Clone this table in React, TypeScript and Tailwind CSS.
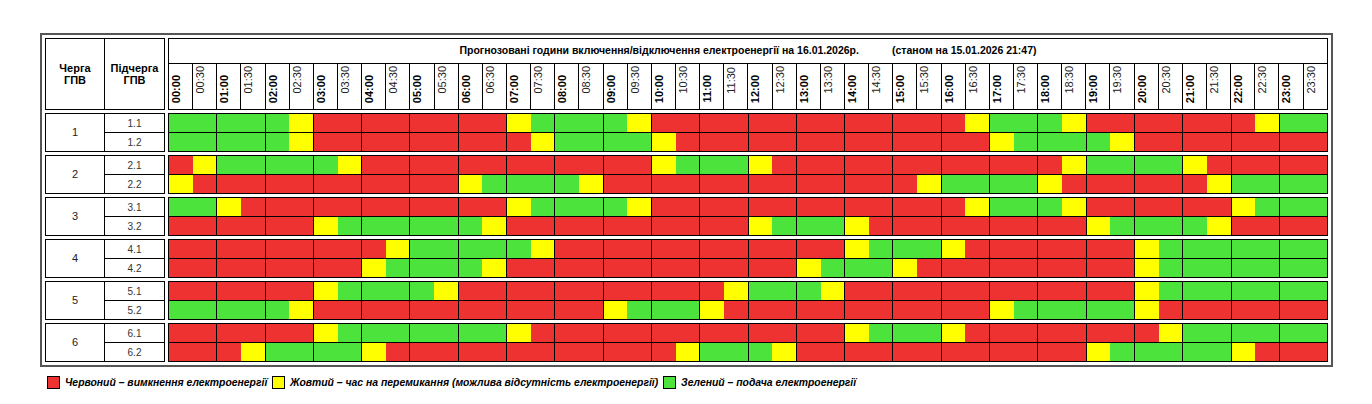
import React from "react";

/* ─── Schedule data: one pair per hour, R = off, Y = switching, G = on ─── */
const groups: { id: string; subs: { id: string; hours: string }[] }[] = [
  {
    id: "1",
    subs: [
      { id: "1.1", hours: "GG GG GY RR RR RR RR YG GG GY RR RR RR RR RR RR RY GG GY RR RR RR RY GG" },
      { id: "1.2", hours: "GG GG GY RR RR RR RR RY GG GG YR RR RR RR RR RR RR YG GG GY RR RR RR RR" },
    ],
  },
  {
    id: "2",
    subs: [
      { id: "2.1", hours: "RY GG GG GY RR RR RR RR RR RR YG GG YR RR RR RR RR RR RY GG GG YR RR RR" },
      { id: "2.2", hours: "YR RR RR RR RR RR YG GG GY RR RR RR RR RR RR RY GG GG YR RR RR RY GG GG" },
    ],
  },
  {
    id: "3",
    subs: [
      { id: "3.1", hours: "GG YR RR RR RR RR RR YG GG GY RR RR RR RR RR RR RY GG GY RR RR RR YG GG" },
      { id: "3.2", hours: "RR RR RR YG GG GG GY RR RR RR RR RR YG GG YR RR RR RR RR YG GG GY RR RR" },
    ],
  },
  {
    id: "4",
    subs: [
      { id: "4.1", hours: "RR RR RR RR RY GG GG GY RR RR RR RR RR RR YG GG YR RR RR RR YG GG GG GG" },
      { id: "4.2", hours: "RR RR RR RR YG GG GY RR RR RR RR RR RR YG GG YR RR RR RR RR YG GG GG GG" },
    ],
  },
  {
    id: "5",
    subs: [
      { id: "5.1", hours: "RR RR RR YG GG GY RR RR RR RR RR RY GG GY RR RR RR RR RR RR YG GG GG GG" },
      { id: "5.2", hours: "GG GG GY RR RR RR RR RR RR YG GG YR RR RR RR RR RR YG GG GG YR RR RR RR" },
    ],
  },
  {
    id: "6",
    subs: [
      { id: "6.1", hours: "RR RR RR YG GG GG GG YR RR RR RR RR RR RR YG GG YR RR RR RR RY GG GG GG" },
      { id: "6.2", hours: "RR RY GG GG YR RR RR RR RR RR RY GG GY RR RR RR RR RR RR YG GG GG YR RR" },
    ],
  },
];

const colour: Record<string, string> = {
  R: "bg-[#ee3232]",
  Y: "bg-[#ffff00]",
  G: "bg-[#4ce43c]",
};

const times = Array.from({ length: 48 }, (_, i) => {
  const h = String(Math.floor(i / 2)).padStart(2, "0");
  return { label: `${h}:${i % 2 ? "30" : "00"}`, full: i % 2 === 0 };
});

function ScheduleRow({ hours, last }: { hours: string; last?: boolean }) {
  return (
    <div className={`flex flex-1 ${last ? "" : "border-b border-black"}`}>
      {hours.split(" ").map((pair, h) => (
        <div key={h} className={`flex flex-1 ${h ? "border-l border-black" : ""}`}>
          <div className={`flex-1 ${colour[pair[0]]}`} />
          <div className={`flex-1 ${colour[pair[1]]}`} />
        </div>
      ))}
    </div>
  );
}

function LegendItem({ swatch, text, width }: { swatch: string; text: string; width?: string }) {
  return (
    <div className={`flex items-center gap-[5px] ${width ?? ""}`}>
      <span className={`w-[13px] h-[13px] border border-black ${swatch}`} />
      <span className="text-[10.4px] font-bold italic text-black whitespace-nowrap">{text}</span>
    </div>
  );
}

export default function App() {
  return (
    <div className="min-h-[404px] bg-white pt-[33px] pl-[40px] font-['Liberation_Sans',Arial,sans-serif] text-black">
      {/* ─── Frame ─── */}
      <div className="w-[1293px] border-2 border-[#555] p-[3px] flex flex-col gap-[3px]">
        {/* Header */}
        <div className="flex h-[72px]">
          <div className="w-[60px] border border-black flex items-center justify-center text-center text-[11px] leading-[12px] font-bold">
            Черга
            <br />
            ГПВ
          </div>
          <div className="w-[60px] border-y border-r border-black flex items-center justify-center text-center text-[11px] leading-[12px] font-bold">
            Підчерга
            <br />
            ГПВ
          </div>
          <div className="ml-[3px] flex-1 border border-black flex flex-col">
            <div className="h-[25px] border-b border-black flex items-center justify-center text-[10.5px] font-bold whitespace-nowrap">
              <span>Прогнозовані години включення/відключення електроенергії на 16.01.2026р.</span>
              <span className="ml-[33px]">(станом на 15.01.2026 21:47)</span>
            </div>
            <div className="flex flex-1">
              {times.map((t, i) => (
                <div
                  key={t.label}
                  className={`flex-1 flex flex-col items-start justify-end pl-[1px] ${
                    i ? "border-l border-black" : ""
                  } ${t.full ? "pb-[6px]" : "pb-[15px]"}`}
                >
                  <span
                    className={`[writing-mode:vertical-rl] rotate-180 text-[11px] leading-[12px] ${
                      t.full ? "font-bold text-black" : "font-normal text-[#222]"
                    }`}
                  >
                    {t.label}
                  </span>
                </div>
              ))}
            </div>
          </div>
        </div>

        {/* Groups */}
        {groups.map((g) => (
          <div key={g.id} className="flex h-[39px]">
            <div className="w-[60px] border border-black flex items-center justify-center text-[11px] text-[#222]">
              {g.id}
            </div>
            <div className="w-[60px] border-y border-r border-black flex flex-col">
              {g.subs.map((s, i) => (
                <div
                  key={s.id}
                  className={`flex-1 flex items-center justify-center text-[10px] text-[#333] ${
                    i === 0 ? "border-b border-black" : ""
                  }`}
                >
                  {s.id}
                </div>
              ))}
            </div>
            <div className="ml-[3px] flex-1 border border-black flex flex-col">
              {g.subs.map((s, i) => (
                <ScheduleRow key={s.id} hours={s.hours} last={i === g.subs.length - 1} />
              ))}
            </div>
          </div>
        ))}
      </div>

      {/* ─── Legend ─── */}
      <div className="mt-[8px] ml-[7px] flex items-center h-[16px]">
        <LegendItem swatch="bg-[#ee3232]" text="Червоний – вимкнення електроенергії" width="w-[225px]" />
        <LegendItem
          swatch="bg-[#ffff00]"
          text="Жовтий – час на перемикання (можлива відсутність електроенергії)"
          width="w-[391px]"
        />
        <LegendItem swatch="bg-[#4ce43c]" text="Зелений – подача електроенергії" />
      </div>
    </div>
  );
}
